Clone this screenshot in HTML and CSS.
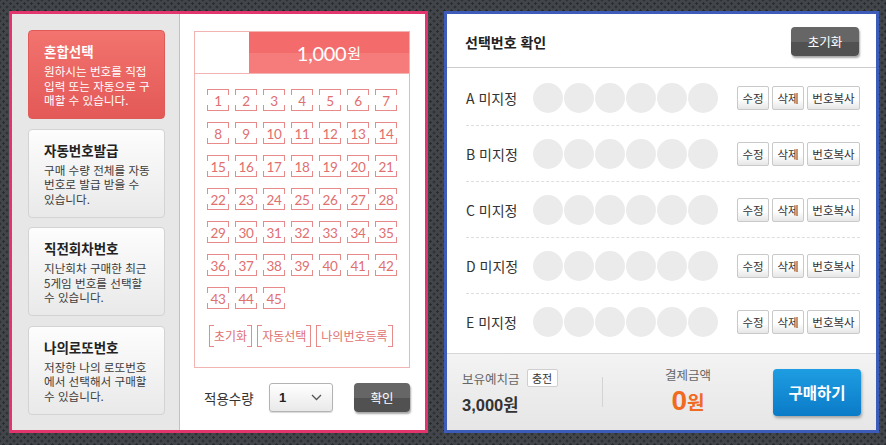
FILE: index.html
```html
<!DOCTYPE html>
<html lang="ko">
<head>
<meta charset="utf-8">
<title>로또 구매</title>
<link rel="stylesheet" href="styles.css">
</head>
<body>
<div class="stage">
  <section class="panel panel-pick">
    <nav class="modes">
      <div class="mode active">
        <h3>혼합선택</h3>
        <p>원하시는 번호를 직접<br>입력 또는 자동으로 구<br>매할 수 있습니다.</p>
      </div>
      <div class="mode">
        <h3>자동번호발급</h3>
        <p>구매 수량 전체를 자동<br>번호로 발급 받을 수<br>있습니다.</p>
      </div>
      <div class="mode">
        <h3>직전회차번호</h3>
        <p>지난회차 구매한 최근<br>5게임 번호를 선택할<br>수 있습니다.</p>
      </div>
      <div class="mode">
        <h3>나의로또번호</h3>
        <p>저장한 나의 로또번호<br>에서 선택해서 구매할<br>수 있습니다.</p>
      </div>
    </nav>
    <div class="pick">
      <div class="slip">
        <div class="slip-head">
          <span class="slip-blank"></span>
          <span class="slip-price"><b>1,000</b><span class="won">원</span></span>
        </div>
        <div class="nums">
          <span class="num">1</span><span class="num">2</span><span class="num">3</span><span class="num">4</span><span class="num">5</span><span class="num">6</span><span class="num">7</span>
          <span class="num">8</span><span class="num">9</span><span class="num">10</span><span class="num">11</span><span class="num">12</span><span class="num">13</span><span class="num">14</span>
          <span class="num">15</span><span class="num">16</span><span class="num">17</span><span class="num">18</span><span class="num">19</span><span class="num">20</span><span class="num">21</span>
          <span class="num">22</span><span class="num">23</span><span class="num">24</span><span class="num">25</span><span class="num">26</span><span class="num">27</span><span class="num">28</span>
          <span class="num">29</span><span class="num">30</span><span class="num">31</span><span class="num">32</span><span class="num">33</span><span class="num">34</span><span class="num">35</span>
          <span class="num">36</span><span class="num">37</span><span class="num">38</span><span class="num">39</span><span class="num">40</span><span class="num">41</span><span class="num">42</span>
          <span class="num">43</span><span class="num">44</span><span class="num">45</span>
        </div>
        <div class="slip-tools">
          <span class="bracket">초기화</span>
          <span class="bracket">자동선택</span>
          <span class="bracket">나의번호등록</span>
        </div>
      </div>
      <div class="apply">
        <span class="apply-label">적용수량</span>
        <div class="select">
          <span class="select-val">1</span>
          <svg class="chev" width="11" height="7" viewBox="0 0 11 7"><polyline points="1,1 5.5,5.5 10,1" fill="none" stroke="#555" stroke-width="1.3"/></svg>
        </div>
        <button class="btn-dark btn-ok">확인</button>
      </div>
    </div>
  </section>

  <section class="panel panel-confirm">
    <header class="confirm-head">
      <h2>선택번호 확인</h2>
      <button class="btn-dark btn-reset">초기화</button>
    </header>
    <div class="rows">
      <div class="row">
        <span class="row-label">A 미지정</span>
        <span class="balls"><i></i><i></i><i></i><i></i><i></i><i></i></span>
        <span class="actions"><button class="act">수정</button><button class="act">삭제</button><button class="act act-wide">번호복사</button></span>
      </div>
      <div class="row">
        <span class="row-label">B 미지정</span>
        <span class="balls"><i></i><i></i><i></i><i></i><i></i><i></i></span>
        <span class="actions"><button class="act">수정</button><button class="act">삭제</button><button class="act act-wide">번호복사</button></span>
      </div>
      <div class="row">
        <span class="row-label">C 미지정</span>
        <span class="balls"><i></i><i></i><i></i><i></i><i></i><i></i></span>
        <span class="actions"><button class="act">수정</button><button class="act">삭제</button><button class="act act-wide">번호복사</button></span>
      </div>
      <div class="row">
        <span class="row-label">D 미지정</span>
        <span class="balls"><i></i><i></i><i></i><i></i><i></i><i></i></span>
        <span class="actions"><button class="act">수정</button><button class="act">삭제</button><button class="act act-wide">번호복사</button></span>
      </div>
      <div class="row">
        <span class="row-label">E 미지정</span>
        <span class="balls"><i></i><i></i><i></i><i></i><i></i><i></i></span>
        <span class="actions"><button class="act">수정</button><button class="act">삭제</button><button class="act act-wide">번호복사</button></span>
      </div>
    </div>
    <footer class="pay">
      <div class="pay-own">
        <div class="pay-line"><span class="pay-cap">보유예치금</span><button class="charge">충전</button></div>
        <div class="own-amt">3,000원</div>
      </div>
      <span class="pay-div"></span>
      <div class="pay-total">
        <div class="pay-cap">결제금액</div>
        <div class="total-amt"><b>0</b><span>원</span></div>
      </div>
      <button class="buy">구매하기</button>
    </footer>
  </section>
</div>
</body>
</html>
```

FILE: styles.css
```css
* { box-sizing: border-box; margin: 0; padding: 0; }

body {
  width: 886px;
  height: 445px;
  overflow: hidden;
  font-family: "Noto Sans CJK KR", "Noto Sans", sans-serif;
  background-color: #42464a;
  background-image:
    radial-gradient(circle, #25282a 0 0.9px, transparent 1.4px),
    radial-gradient(circle, #25282a 0 0.9px, transparent 1.4px);
  background-size: 7px 7px, 7px 7px;
  background-position: 0 0, 3.5px 3.5px;
}

button { font-family: inherit; border: none; cursor: pointer; }

.stage {
  display: flex;
  gap: 16px;
  padding: 11px 0 0 9px;
}

.panel {
  height: 422px;
  border: 3px solid;
  background: #fff;
  display: flex;
}

.panel-pick { width: 419px; border-color: #e3356d; }
.panel-confirm { width: 435px; border-color: #3d5cba; flex-direction: column; }

/* ---------- mode menu ---------- */
.modes {
  width: 169px;
  background: #e7e7e7;
  border-right: 1px solid #c2c2c2;
  padding: 16px 14px 0 16px;
  display: flex;
  flex-direction: column;
  gap: 9.5px;
}

.mode {
  height: 89px;
  border: 1px solid #d3d3d3;
  border-radius: 4px;
  background: linear-gradient(#fdfdfd, #e9e9e9);
  padding: 11px 0 0 15px;
}

.mode h3 {
  font-size: 13.5px;
  line-height: 18px;
  font-weight: 700;
  color: #222;
  margin-bottom: 4px;
}

.mode p {
  font-size: 11.6px;
  line-height: 14.5px;
  color: #3c3c3c;
  white-space: nowrap;
}

.mode.active {
  background: linear-gradient(#f2736f, #e35957);
  border-color: #e05a58;
}
.mode.active h3, .mode.active p { color: #fff; }

/* ---------- slip ---------- */
.pick {
  flex: 1;
  padding: 17px 15px 0 14px;
  display: flex;
  flex-direction: column;
}

.slip {
  height: 337px;
  border: 1px solid #f2b3b3;
}

.slip-head {
  height: 42px;
  display: flex;
  border-bottom: 1px solid #f2b3b3;
}

.slip-blank { width: 54px; }

.slip-price {
  flex: 1;
  background: linear-gradient(#f36b6b 0 52%, #f57c7b 52% 100%);
  color: #fff;
  display: flex;
  align-items: center;
  justify-content: center;
}

.slip-price b {
  font-family: Lato, "Noto Sans", sans-serif;
  font-weight: 400;
  font-size: 20px;
  letter-spacing: -0.3px;
}

.slip-price .won { font-size: 15px; margin-left: 1px; }

.nums {
  display: grid;
  grid-template-columns: repeat(7, 22px);
  column-gap: 6px;
  row-gap: 11px;
  padding: 15px 0 0 12px;
}

.num {
  --c: #e88a8a;
  height: 22px;
  border-top: 1px solid var(--c);
  border-bottom: 1px solid var(--c);
  background:
    linear-gradient(var(--c), var(--c)) left top / 1px 5px no-repeat,
    linear-gradient(var(--c), var(--c)) right top / 1px 5px no-repeat,
    linear-gradient(var(--c), var(--c)) left bottom / 1px 5px no-repeat,
    linear-gradient(var(--c), var(--c)) right bottom / 1px 5px no-repeat;
  display: flex;
  align-items: center;
  justify-content: center;
  padding-top: 1px;
  font-family: Lato, "Noto Sans", sans-serif;
  font-size: 13.5px;
  color: #e06f6f;
  letter-spacing: -0.4px;
}

.slip-tools {
  display: flex;
  gap: 5px;
  margin-top: 16px;
  padding-left: 14px;
}

.bracket {
  --c: #e88a8a;
  height: 22px;
  padding: 0 4px;
  border-left: 1px solid var(--c);
  border-right: 1px solid var(--c);
  background:
    linear-gradient(var(--c), var(--c)) left top / 4px 1px no-repeat,
    linear-gradient(var(--c), var(--c)) right top / 4px 1px no-repeat,
    linear-gradient(var(--c), var(--c)) left bottom / 4px 1px no-repeat,
    linear-gradient(var(--c), var(--c)) right bottom / 4px 1px no-repeat;
  font-size: 12px;
  line-height: 22px;
  color: #e06f6f;
}

.apply {
  display: flex;
  align-items: center;
  margin-top: 15px;
  padding-left: 10px;
}

.apply-label {
  font-size: 13.5px;
  color: #333;
  width: 65px;
}

.select {
  width: 64px;
  height: 29px;
  border: 1px solid #b3b3b3;
  border-radius: 3px;
  background: linear-gradient(#fff, #e9e9e9);
  box-shadow: 0 1px 1px rgba(0, 0, 0, 0.15);
  display: flex;
  align-items: center;
  justify-content: space-between;
  padding: 0 10px 0 9px;
}

.select-val {
  font-family: "Liberation Sans", Arial, sans-serif;
  font-weight: 700;
  font-size: 13px;
  color: #222;
}

.btn-dark {
  background: linear-gradient(#666 0 50%, #515151 50% 100%);
  color: #fff;
  border-radius: 4px;
  box-shadow: 1px 2px 2px rgba(0, 0, 0, 0.35);
  font-size: 12.5px;
}

.btn-ok {
  width: 56px;
  height: 29px;
  margin-left: 21px;
}

/* ---------- confirm panel ---------- */
.confirm-head {
  height: 54px;
  border-bottom: 1px solid #cdcdcd;
  display: flex;
  align-items: center;
  justify-content: space-between;
  padding: 0 17px 0 18px;
}

.confirm-head h2 {
  font-size: 14px;
  font-weight: 700;
  color: #222;
  margin-top: 3px;
}

.btn-reset {
  width: 68px;
  height: 29px;
  margin-top: 1px;
}

.rows {
  flex: 1;
  padding: 2px 16px 0 19px;
  display: flex;
  flex-direction: column;
}

.row {
  height: 56px;
  display: flex;
  align-items: center;
  border-bottom: 1px dashed #dedede;
}
.row:last-child { border-bottom: none; }

.row-label {
  width: 67px;
  font-size: 14px;
  color: #333;
}

.balls { display: flex; gap: 1px; }
.balls i {
  width: 30px;
  height: 30px;
  border-radius: 50%;
  background: #ebebeb;
}

.actions {
  margin-left: auto;
  display: flex;
  gap: 3px;
}

.act {
  width: 32px;
  height: 24px;
  border: 1px solid #c9c9c9;
  border-radius: 2px;
  background: linear-gradient(#fff 0 55%, #e6e6e6 100%);
  font-size: 11.5px;
  color: #333;
}
.act-wide { width: 53px; }

/* ---------- pay footer ---------- */
.pay {
  height: 77px;
  border-top: 1px solid #d6d6d6;
  background: linear-gradient(#f3f3f3, #e6e6e6);
  display: flex;
  align-items: center;
  padding: 0 15px;
}

.pay-own { width: 140px; }

.pay-line { display: flex; align-items: center; height: 18px; }

.pay-cap {
  font-size: 12.5px;
  color: #666;
  line-height: 17px;
}

.charge {
  width: 31px;
  height: 18px;
  margin-left: 7px;
  background: #fff;
  border: 1px solid #cfcfcf;
  border-radius: 2px;
  font-size: 11px;
  color: #333;
}

.own-amt {
  margin-top: 8px;
  line-height: 20px;
  font-family: "Liberation Sans", "Noto Sans CJK KR", sans-serif;
  font-weight: 700;
  font-size: 16.5px;
  color: #333;
}

.pay-div {
  width: 1px;
  height: 30px;
  background: #d3d3d3;
}

.pay-total {
  flex: 1;
  text-align: center;
}

.total-amt {
  color: #f06a1f;
  font-weight: 700;
  line-height: 30px;
  margin-top: 3px;
}
.total-amt b {
  font-family: "Liberation Sans", Arial, sans-serif;
  font-size: 28px;
}
.total-amt span { font-size: 19px; }

.buy {
  width: 88px;
  height: 47px;
  border-radius: 4px;
  background: linear-gradient(#1e9de2, #0b7bc7);
  box-shadow: 1px 2px 3px rgba(0, 0, 0, 0.3);
  color: #fff;
  font-weight: 700;
  font-size: 15.5px;
}
```
